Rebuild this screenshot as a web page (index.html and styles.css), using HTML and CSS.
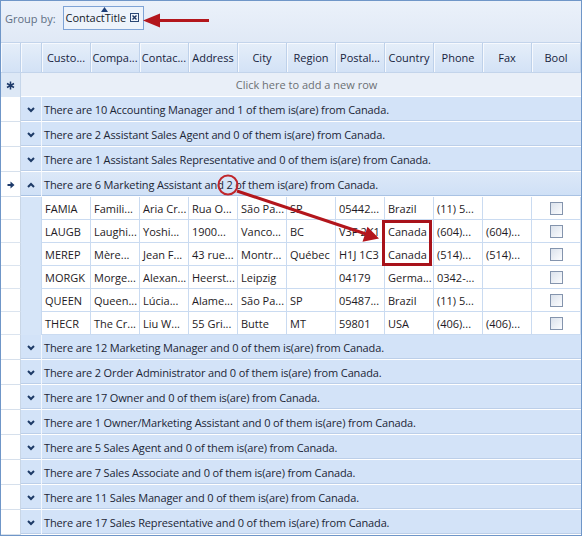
FILE: index.html
```html
<!DOCTYPE html>
<html>
<head>
<meta charset="utf-8">
<link rel="stylesheet" href="styles.css">
</head>
<body>
<div class="grid">
  <div class="gpanel">
    <span class="gp-label">Group by:</span>
    <span class="chip">
      <svg class="sort" width="7" height="5" viewBox="0 0 7 5"><polygon points="3.5,0 7,5 0,5" fill="#1d3f78"/></svg>
      <span class="chip-text">ContactTitle</span>
      <span class="close"><svg width="9" height="9" viewBox="0 0 9 9"><rect x="0.5" y="0.5" width="8" height="8" fill="#eef3fb" stroke="#2a4775"/><path d="M2.5 2.5 L6.5 6.5 M6.5 2.5 L2.5 6.5" stroke="#1d3560" stroke-width="1.4"/></svg></span>
    </span>
  </div>

  <div class="hdr">
    <div class="hc"></div><div class="hc"></div>
    <div class="hc">Custo...</div><div class="hc">Compa...</div><div class="hc">Contac...</div><div class="hc">Address</div><div class="hc">City</div><div class="hc">Region</div><div class="hc">Postal...</div><div class="hc">Country</div><div class="hc">Phone</div><div class="hc">Fax</div><div class="hc">Bool</div>
  </div>

  <div class="newrow">
    <div class="nr-ind"><svg width="9" height="9" viewBox="0 0 9 9"><path d="M4.5 0.5 V8.5 M1 2.5 L8 6.5 M8 2.5 L1 6.5" stroke="#1d3a6a" stroke-width="1.5"/></svg></div>
    <div class="nr-text">Click here to add a new row</div>
  </div>

  <div class="grp"><div class="ind"></div><div class="exp"><svg width="8" height="6" viewBox="0 0 8 6"><polyline points="1,1 4,4 7,1" fill="none" stroke="#1d3a66" stroke-width="2"/></svg></div><div class="gtext">There are 10 Accounting Manager and 1 of them is(are) from Canada.</div></div>
  <div class="grp"><div class="ind"></div><div class="exp"><svg width="8" height="6" viewBox="0 0 8 6"><polyline points="1,1 4,4 7,1" fill="none" stroke="#1d3a66" stroke-width="2"/></svg></div><div class="gtext">There are 2 Assistant Sales Agent and 0 of them is(are) from Canada.</div></div>
  <div class="grp"><div class="ind"></div><div class="exp"><svg width="8" height="6" viewBox="0 0 8 6"><polyline points="1,1 4,4 7,1" fill="none" stroke="#1d3a66" stroke-width="2"/></svg></div><div class="gtext">There are 1 Assistant Sales Representative and 0 of them is(are) from Canada.</div></div>
  <div class="grp open"><div class="ind"><svg width="8" height="8" viewBox="0 0 8 8"><path d="M0.5 3 H3.5 V0.5 L7.5 4 L3.5 7.5 V5 H0.5 Z" fill="#1d3a6a"/></svg></div><div class="exp"><svg width="8" height="6" viewBox="0 0 8 6"><polyline points="1,5 4,2 7,5" fill="none" stroke="#1d3a66" stroke-width="2"/></svg></div><div class="gtext">There are 6 Marketing Assistant and 2 of them is(are) from Canada.</div></div>

  <div class="row"><div class="ind"></div><div class="exp"></div><div class="cell">FAMIA</div><div class="cell">Famili...</div><div class="cell">Aria Cr...</div><div class="cell">Rua O...</div><div class="cell">São Pa...</div><div class="cell">SP</div><div class="cell">05442...</div><div class="cell">Brazil</div><div class="cell">(11) 5...</div><div class="cell"></div><div class="cell cb"><span class="check"></span></div></div>
  <div class="row"><div class="ind"></div><div class="exp"></div><div class="cell">LAUGB</div><div class="cell">Laughi...</div><div class="cell">Yoshi...</div><div class="cell">1900...</div><div class="cell">Vanco...</div><div class="cell">BC</div><div class="cell">V3F 2K1</div><div class="cell">Canada</div><div class="cell">(604)...</div><div class="cell">(604)...</div><div class="cell cb"><span class="check"></span></div></div>
  <div class="row"><div class="ind"></div><div class="exp"></div><div class="cell">MEREP</div><div class="cell">Mère...</div><div class="cell">Jean F...</div><div class="cell">43 rue...</div><div class="cell">Montr...</div><div class="cell">Québec</div><div class="cell">H1J 1C3</div><div class="cell">Canada</div><div class="cell">(514)...</div><div class="cell">(514)...</div><div class="cell cb"><span class="check"></span></div></div>
  <div class="row"><div class="ind"></div><div class="exp"></div><div class="cell">MORGK</div><div class="cell">Morge...</div><div class="cell">Alexan...</div><div class="cell">Heerst...</div><div class="cell">Leipzig</div><div class="cell"></div><div class="cell">04179</div><div class="cell">Germa...</div><div class="cell">0342-...</div><div class="cell"></div><div class="cell cb"><span class="check"></span></div></div>
  <div class="row"><div class="ind"></div><div class="exp"></div><div class="cell">QUEEN</div><div class="cell">Queen...</div><div class="cell">Lúcia...</div><div class="cell">Alame...</div><div class="cell">São Pa...</div><div class="cell">SP</div><div class="cell">05487...</div><div class="cell">Brazil</div><div class="cell">(11) 5...</div><div class="cell"></div><div class="cell cb"><span class="check"></span></div></div>
  <div class="row"><div class="ind"></div><div class="exp"></div><div class="cell">THECR</div><div class="cell">The Cr...</div><div class="cell">Liu W...</div><div class="cell">55 Gri...</div><div class="cell">Butte</div><div class="cell">MT</div><div class="cell">59801</div><div class="cell">USA</div><div class="cell">(406)...</div><div class="cell">(406)...</div><div class="cell cb"><span class="check"></span></div></div>

  <div class="grp"><div class="ind"></div><div class="exp"><svg width="8" height="6" viewBox="0 0 8 6"><polyline points="1,1 4,4 7,1" fill="none" stroke="#1d3a66" stroke-width="2"/></svg></div><div class="gtext">There are 12 Marketing Manager and 0 of them is(are) from Canada.</div></div>
  <div class="grp"><div class="ind"></div><div class="exp"><svg width="8" height="6" viewBox="0 0 8 6"><polyline points="1,1 4,4 7,1" fill="none" stroke="#1d3a66" stroke-width="2"/></svg></div><div class="gtext">There are 2 Order Administrator and 0 of them is(are) from Canada.</div></div>
  <div class="grp"><div class="ind"></div><div class="exp"><svg width="8" height="6" viewBox="0 0 8 6"><polyline points="1,1 4,4 7,1" fill="none" stroke="#1d3a66" stroke-width="2"/></svg></div><div class="gtext">There are 17 Owner and 0 of them is(are) from Canada.</div></div>
  <div class="grp"><div class="ind"></div><div class="exp"><svg width="8" height="6" viewBox="0 0 8 6"><polyline points="1,1 4,4 7,1" fill="none" stroke="#1d3a66" stroke-width="2"/></svg></div><div class="gtext">There are 1 Owner/Marketing Assistant and 0 of them is(are) from Canada.</div></div>
  <div class="grp"><div class="ind"></div><div class="exp"><svg width="8" height="6" viewBox="0 0 8 6"><polyline points="1,1 4,4 7,1" fill="none" stroke="#1d3a66" stroke-width="2"/></svg></div><div class="gtext">There are 5 Sales Agent and 0 of them is(are) from Canada.</div></div>
  <div class="grp"><div class="ind"></div><div class="exp"><svg width="8" height="6" viewBox="0 0 8 6"><polyline points="1,1 4,4 7,1" fill="none" stroke="#1d3a66" stroke-width="2"/></svg></div><div class="gtext">There are 7 Sales Associate and 0 of them is(are) from Canada.</div></div>
  <div class="grp"><div class="ind"></div><div class="exp"><svg width="8" height="6" viewBox="0 0 8 6"><polyline points="1,1 4,4 7,1" fill="none" stroke="#1d3a66" stroke-width="2"/></svg></div><div class="gtext">There are 11 Sales Manager and 0 of them is(are) from Canada.</div></div>
  <div class="grp"><div class="ind"></div><div class="exp"><svg width="8" height="6" viewBox="0 0 8 6"><polyline points="1,1 4,4 7,1" fill="none" stroke="#1d3a66" stroke-width="2"/></svg></div><div class="gtext">There are 17 Sales Representative and 0 of them is(are) from Canada.</div></div>

  <svg class="annot" width="582" height="536" viewBox="0 0 582 536">
    <line x1="157" y1="20.5" x2="209" y2="20.5" stroke="#b3161c" stroke-width="3"/>
    <polygon points="143,20.5 160,13.5 160,27.5" fill="#b3161c"/>
    <circle cx="228" cy="185" r="9.5" fill="none" stroke="#c0262b" stroke-width="2"/>
    <line x1="237" y1="191" x2="366" y2="234" stroke="#b3161c" stroke-width="3"/>
    <polygon points="379,238.5 367.5,226.8 362.5,241.8" fill="#b3161c"/>
    <rect x="383.5" y="221.5" width="47" height="43" fill="none" stroke="#a8121a" stroke-width="3"/>
  </svg>
</div>
</body>
</html>
```

FILE: styles.css
```css
body {
  margin: 0;
  font-family: "Open Sans", "Noto Sans", sans-serif;
  font-size: 11px;
  background: #fff;
}

.grid {
  position: relative;
  width: 582px;
  height: 536px;
  box-sizing: border-box;
  border: 1px solid #6f96c8;
  background: #fff;
  overflow: hidden;
}

/* group panel */
.gpanel {
  height: 42px;
  box-sizing: border-box;
  border-bottom: 1px solid #c3d4eb;
  background: linear-gradient(#ebf1fa, #e0e9f6);
  display: flex;
  align-items: flex-start;
  padding: 5px 0 0 4px;
}
.gp-label {
  color: #5f6f84;
  line-height: 24px;
  margin-top: 1px;
  margin-right: 7px;
}
.chip {
  position: relative;
  height: 24px;
  box-sizing: border-box;
  border: 1px solid #7ea3d6;
  background: #edf3fb;
  display: flex;
  align-items: center;
  padding: 0 4px 0 2px;
  gap: 4px;
  color: #141a2a;
}
.chip-text { line-height: 20px; letter-spacing: -0.05px; }
.sort {
  position: absolute;
  top: 0;
  left: 37px;
}
.close {
  display: flex;
  margin-top: -1px;
}

/* header */
.hdr {
  display: grid;
  grid-template-columns: 20px 21px repeat(11, 49px);
  height: 30px;
  border-bottom: 1px solid #c3d4eb;
  box-sizing: border-box;
  background: linear-gradient(#e5eef9, #d3e2f6);
}
.hc {
  border-right: 1px solid #bed1ea;
  box-shadow: inset 1px 1px 0 #f6f9fe;
  color: #16233d;
  text-align: center;
  line-height: 30px;
  white-space: nowrap;
  overflow: hidden;
}

/* new row */
.newrow {
  display: grid;
  grid-template-columns: 20px 1fr;
  height: 24px;
  box-sizing: border-box;
  border-bottom: 1px solid #fff;
  background: #e9eff8;
}
.nr-ind {
  background: #dde8f6;
  border-right: 1px solid #c6d6ea;
  display: flex;
  align-items: center;
  justify-content: center;
  padding-top: 1px;
}
.nr-text {
  color: #6c6f74;
  text-align: center;
  line-height: 24px;
  padding-left: 11px;
}

/* group rows */
.grp {
  display: grid;
  grid-template-columns: 20px 21px 1fr;
  height: 25px;
}
.grp .ind {
  background: #fff;
  border-right: 1px solid #c9d6e6;
  border-bottom: 1px solid #d6e0ec;
  display: flex;
  align-items: center;
  justify-content: center;
  padding-top: 1px;
}
.grp .exp,
.grp .gtext {
  background: #d3e3f8;
  border-bottom: 1px solid #fff;
  box-shadow: inset 0 -1px 0 #bccfe9;
}
.grp .exp {
  border-right: 1px solid #f3f7fd;
  display: flex;
  align-items: center;
  justify-content: center;
  padding-top: 1px;
}
.grp .gtext {
  color: #1c2636;
  line-height: 24px;
  padding-top: 1px;
  height: 23px;
  padding-left: 2px;
  letter-spacing: -0.14px;
  white-space: nowrap;
  overflow: hidden;
}
.grp.open .exp,
.grp.open .gtext {
  background: linear-gradient(#dce8f8, #cfe0f6);
  box-shadow: inset 0 -1px 0 #a9c2e3;
}

/* data rows */
.row {
  display: grid;
  grid-template-columns: 20px 21px repeat(11, 49px);
  height: 23px;
}
.row .ind {
  background: #fff;
  border-right: 1px solid #c9d6e6;
  border-bottom: 1px solid #dbe4ef;
}
.row .exp {
  background: #d6e5f8;
  border-right: 1px solid #c7d9f0;
}
.cell {
  border-right: 1px solid #cadbf1;
  border-bottom: 1px solid #cadbf1;
  padding-left: 3px;
  line-height: 24px;
  white-space: nowrap;
  overflow: hidden;
  color: #1e1a24;
}
.cell.cb {
  display: flex;
  align-items: center;
  justify-content: center;
  padding-left: 0;
}
.check {
  width: 13px;
  height: 13px;
  box-sizing: border-box;
  border: 1px solid #8494ad;
  background: linear-gradient(135deg, #dbe2ec, #fbfcfe);
}

/* annotations */
.annot {
  position: absolute;
  top: -1px;
  left: -1px;
  pointer-events: none;
}
```
